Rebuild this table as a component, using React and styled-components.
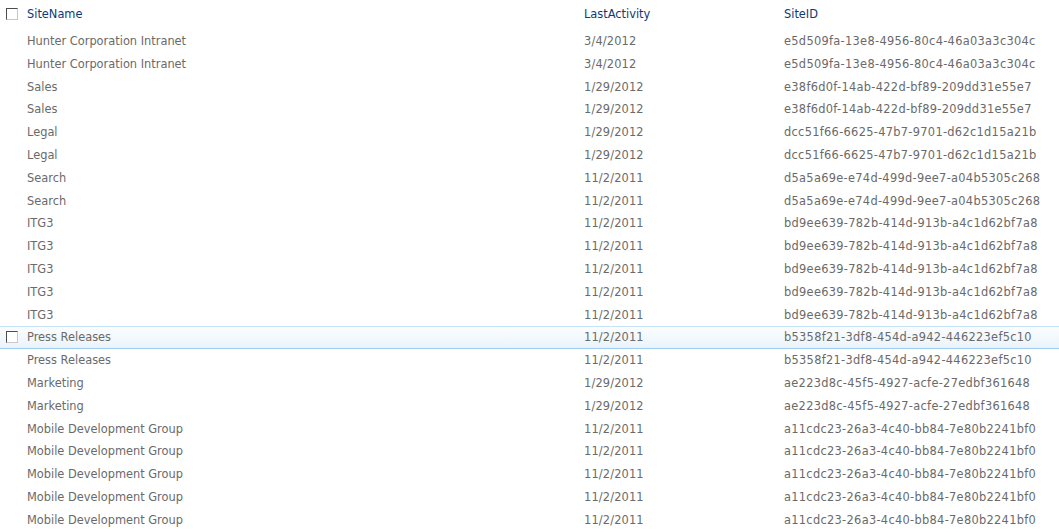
import React from "react";
import styled, { createGlobalStyle } from "styled-components";

const GlobalStyle = createGlobalStyle`
  body {
    margin: 0;
    background: #fff;
    font-family: "DejaVu Sans", Verdana, sans-serif;
  }
`;

const sites = [
  ["Hunter Corporation Intranet", "3/4/2012", "e5d509fa-13e8-4956-80c4-46a03a3c304c"],
  ["Hunter Corporation Intranet", "3/4/2012", "e5d509fa-13e8-4956-80c4-46a03a3c304c"],
  ["Sales", "1/29/2012", "e38f6d0f-14ab-422d-bf89-209dd31e55e7"],
  ["Sales", "1/29/2012", "e38f6d0f-14ab-422d-bf89-209dd31e55e7"],
  ["Legal", "1/29/2012", "dcc51f66-6625-47b7-9701-d62c1d15a21b"],
  ["Legal", "1/29/2012", "dcc51f66-6625-47b7-9701-d62c1d15a21b"],
  ["Search", "11/2/2011", "d5a5a69e-e74d-499d-9ee7-a04b5305c268"],
  ["Search", "11/2/2011", "d5a5a69e-e74d-499d-9ee7-a04b5305c268"],
  ["ITG3", "11/2/2011", "bd9ee639-782b-414d-913b-a4c1d62bf7a8"],
  ["ITG3", "11/2/2011", "bd9ee639-782b-414d-913b-a4c1d62bf7a8"],
  ["ITG3", "11/2/2011", "bd9ee639-782b-414d-913b-a4c1d62bf7a8"],
  ["ITG3", "11/2/2011", "bd9ee639-782b-414d-913b-a4c1d62bf7a8"],
  ["ITG3", "11/2/2011", "bd9ee639-782b-414d-913b-a4c1d62bf7a8"],
  ["Press Releases", "11/2/2011", "b5358f21-3df8-454d-a942-446223ef5c10"],
  ["Press Releases", "11/2/2011", "b5358f21-3df8-454d-a942-446223ef5c10"],
  ["Marketing", "1/29/2012", "ae223d8c-45f5-4927-acfe-27edbf361648"],
  ["Marketing", "1/29/2012", "ae223d8c-45f5-4927-acfe-27edbf361648"],
  ["Mobile Development Group", "11/2/2011", "a11cdc23-26a3-4c40-bb84-7e80b2241bf0"],
  ["Mobile Development Group", "11/2/2011", "a11cdc23-26a3-4c40-bb84-7e80b2241bf0"],
  ["Mobile Development Group", "11/2/2011", "a11cdc23-26a3-4c40-bb84-7e80b2241bf0"],
  ["Mobile Development Group", "11/2/2011", "a11cdc23-26a3-4c40-bb84-7e80b2241bf0"],
  ["Mobile Development Group", "11/2/2011", "a11cdc23-26a3-4c40-bb84-7e80b2241bf0"],
];

const HOVER_ROW = 13;

function App() {
  return (
    <>
      <GlobalStyle />
      <ListView>
        <HeaderRow>
          <CheckCell>
            <CheckBox />
          </CheckCell>
          <HeaderCell>SiteName</HeaderCell>
          <HeaderCell>LastActivity</HeaderCell>
          <HeaderCell>SiteID</HeaderCell>
        </HeaderRow>
        {sites.map(([name, date, id], i) => (
          <Row key={i} $hover={i === HOVER_ROW}>
            <CheckCell>{i === HOVER_ROW && <CheckBox />}</CheckCell>
            <Cell>{name}</Cell>
            <Cell $spacing="0.15px">{date}</Cell>
            <Cell $spacing="0.3px">{id}</Cell>
          </Row>
        ))}
      </ListView>
    </>
  );
}

const ListView = styled.div`
  display: flex;
  flex-direction: column;
  width: 1059px;
  height: 532px;
  overflow: hidden;
  font-size: 11.4px;
`;

const gridCols = `
  display: grid;
  grid-template-columns: 27px 557px 200px 1fr;
  align-items: center;
`;

const HeaderRow = styled.div`
  ${gridCols}
  height: 28px;
  margin-bottom: 1.7px;
  flex-shrink: 0;
`;

const HeaderCell = styled.div`
  color: #0c3a78;
  white-space: nowrap;
`;

const Row = styled.div`
  ${gridCols}
  height: 22.8px;
  box-sizing: border-box;
  border-top: 1px solid ${(p) => (p.$hover ? "#c7e3f7" : "transparent")};
  border-bottom: 1px solid ${(p) => (p.$hover ? "#9fcdf0" : "transparent")};
  background: ${(p) =>
    p.$hover ? "linear-gradient(#fbfdff, #eaf4fc)" : "transparent"};
  flex-shrink: 0;
`;

const Cell = styled.div`
  color: #6a6a6a;
  white-space: nowrap;
  letter-spacing: ${(p) => p.$spacing || "0"};
`;

const CheckCell = styled.div`
  display: flex;
  align-items: center;
  padding-left: 6px;
`;

const CheckBox = styled.span`
  display: block;
  width: 12px;
  height: 12px;
  box-sizing: border-box;
  background: #fff;
  border: 1px solid #c8c8c8;
  border-top-color: #4c4c4c;
  border-left-color: #4c4c4c;
`;

export default App;
